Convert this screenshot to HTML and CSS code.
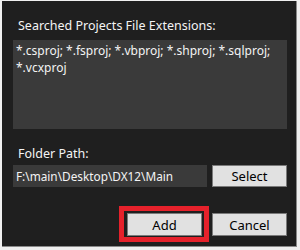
FILE: index.html
```html
<!DOCTYPE html>
<html>
<head>
<meta charset="utf-8">
<link rel="stylesheet" href="styles.css">
</head>
<body>
<div class="window">
  <div class="label label-top">Searched Projects File Extensions:</div>
  <div class="textarea">*.csproj; *.fsproj; *.vbproj; *.shproj; *.sqlproj; *.vcxproj</div>
  <div class="label label-folder">Folder Path:</div>
  <div class="row">
    <div class="textbox">F:\main\Desktop\DX12\Main</div>
    <button class="btn">Select</button>
  </div>
  <div class="actions">
    <div class="highlight"><button class="btn btn-add">Add</button></div>
    <button class="btn">Cancel</button>
  </div>
</div>
</body>
</html>
```

FILE: styles.css
```css
html, body {
  margin: 0;
  padding: 0;
}
body {
  background: #f0f0f0;
  width: 300px;
  height: 250px;
  padding: 1px 3px 3px 2px;
  box-sizing: border-box;
  font-family: "Noto Sans", "Liberation Sans", sans-serif;
}
.window {
  background: #1f1f1f;
  border-right: 1px solid #8a8a8a;
  border-bottom: 1px solid #8a8a8a;
  height: 246px;
  box-sizing: border-box;
  padding: 0 9px 0 11px;
  display: flex;
  flex-direction: column;
  color: #f4f4f4;
}
.label {
  font-size: 12.5px;
  line-height: 16px;
  padding-left: 5px;
}
.label-top {
  margin-top: 17px;
  margin-bottom: 6px;
}
.textarea {
  background: #3a3a3a;
  height: 89px;
  box-sizing: border-box;
  padding: 2px 4px 0 3px;
  font-size: 12px;
  line-height: 17px;
}
.label-folder {
  margin-top: 17px;
  margin-bottom: 3px;
}
.row {
  display: flex;
  gap: 5px;
  height: 22px;
}
.textbox {
  background: #3a3a3a;
  width: 194px;
  box-sizing: border-box;
  padding: 2px 3px 0;
  font-size: 11.8px;
  line-height: 18px;
  white-space: nowrap;
}
.btn {
  width: 75px;
  height: 22px;
  margin: 0;
  padding: 0;
  background: #e1e1e1;
  border: 1px solid #7a7a7a;
  font-family: "Noto Sans", "Liberation Sans", sans-serif;
  font-size: 13px;
  color: #000;
  box-sizing: border-box;
}
.actions {
  display: flex;
  justify-content: flex-end;
  gap: 10px;
  margin-top: 26px;
}
.btn-add {
  display: block;
  height: 23px;
}
.highlight {
  position: relative;
}
.highlight::before {
  content: "";
  position: absolute;
  left: -8px;
  top: -7px;
  right: -7px;
  bottom: -6px;
  border: 5px solid #e5212b;
}
.actions > .btn {
  height: 23px;
}
```
